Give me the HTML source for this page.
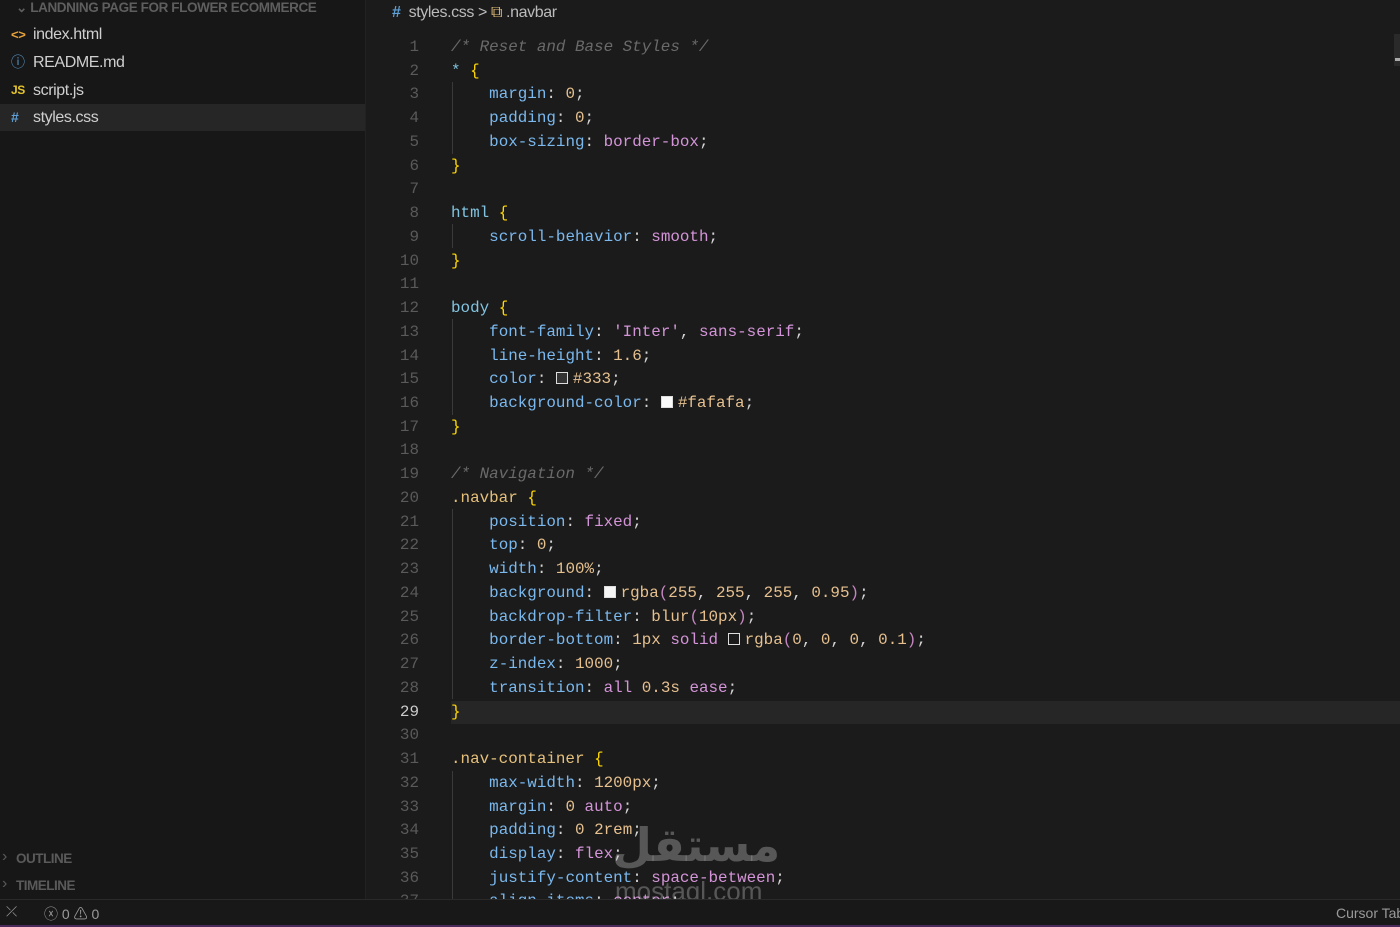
<!DOCTYPE html>
<html><head><style>
*{margin:0;padding:0;box-sizing:border-box}
html,body{width:1400px;height:927px;overflow:hidden}
body{background:#1b1b1b;position:relative;font-family:"Liberation Sans",sans-serif}
.side{position:absolute;left:0;top:0;width:366px;height:899px;background:#171717;border-right:1px solid #222}
.hdr{position:absolute;left:16px;top:0;font-size:13.5px;font-weight:bold;color:#5e5e5e;letter-spacing:-0.4px;white-space:nowrap}
.item{position:absolute;left:0;width:365px;height:27px;font-size:16px;color:#cfcfcf;line-height:27px;padding-left:33px;letter-spacing:-0.4px}
.item i{position:absolute;left:11px;font-style:normal;font-size:12px;font-weight:bold}
.sec{position:absolute;left:16px;font-size:13.5px;font-weight:bold;color:#5a5a5a;letter-spacing:-0.5px}
.sec:before{content:"›";position:absolute;left:-14px;font-weight:normal;font-size:16px;top:-3px}
.crumb{position:absolute;left:392px;top:4px;font-size:16px;color:#bbb;letter-spacing:-0.4px;white-space:nowrap}
.code{position:absolute;left:366px;top:36px;width:1034px;font-family:"Liberation Mono",monospace;font-size:15.9px}
.ln{height:23.74px;line-height:23.74px;position:relative;white-space:pre;color:#d4d4d4}
.ln b{position:absolute;right:981px;font-weight:normal;color:#5a5a5a;text-align:right}
.ln span.t{position:absolute;left:85px}
.cur:after{content:"";position:absolute;left:85px;right:0;top:0;bottom:0;background:#262626;z-index:-1}
.cur b{color:#ccc}
.c{color:#6a6a6a;font-style:italic}.sel{color:#e5c07b}.tg{color:#82c4e0}.br{color:#ffd700}.p{color:#7ab8ee}.n{color:#e6c08f}.k{color:#d494d8}.pu{color:#c586c0}
.sw{display:inline-block;width:12px;height:12px;border:1px solid #ddd;vertical-align:-1px;margin-right:5px}
.guide{position:absolute;left:452px;width:1px;background:#3a3a3a}
.status{position:absolute;left:0;top:899px;width:1400px;height:28px;background:#181818;border-top:1px solid #2a2a2a;color:#9a9a9a;font-size:14px;white-space:nowrap;overflow:hidden}
</style></head><body>
<div class="side">
<div class="hdr">⌄ LANDNING PAGE FOR FLOWER ECOMMERCE</div>
<div class="item" style="top:21px"><i style="color:#e8a33c;font-size:13px">&lt;&gt;</i>index.html</div>
<div class="item" style="top:49px"><i style="color:#5d9fd6;font-size:14px;font-weight:normal">ⓘ</i>README.md</div>
<div class="item" style="top:77px"><i style="color:#e5c52e">JS</i>script.js</div>
<div class="item" style="top:104px;background:#262626"><i style="color:#5d9fd6;font-size:14px">#</i>styles.css</div>
<div class="sec" style="top:851px">OUTLINE</div>
<div class="sec" style="top:878px">TIMELINE</div>
</div>
<div class="crumb"><span style="color:#5d9fd6;font-weight:bold">#</span>&nbsp; styles.css &gt; <span style="color:#e5c07b">⧉</span> .navbar</div>
<div style="position:absolute;left:1394px;top:34px;width:6px;height:32px;background:#2a2a2a"></div>
<div style="position:absolute;left:1395px;top:58px;width:5px;height:3px;background:#aaa"></div>
<div class="guide" style="top:82px;height:72px"></div>
<div class="guide" style="top:224px;height:24px"></div>
<div class="guide" style="top:319px;height:96px"></div>
<div class="guide" style="top:509px;height:190px"></div>
<div class="guide" style="top:771px;height:128px"></div>
<div class="code">
<div class="ln"><b>1</b><span class="t c">/* Reset and Base Styles */</span></div>
<div class="ln"><b>2</b><span class="t"><span class="tg">*</span> <span class="br">{</span></span></div>
<div class="ln"><b>3</b><span class="t">    <span class="p">margin</span>: <span class="n">0</span>;</span></div>
<div class="ln"><b>4</b><span class="t">    <span class="p">padding</span>: <span class="n">0</span>;</span></div>
<div class="ln"><b>5</b><span class="t">    <span class="p">box-sizing</span>: <span class="k">border-box</span>;</span></div>
<div class="ln"><b>6</b><span class="t br">}</span></div>
<div class="ln"><b>7</b></div>
<div class="ln"><b>8</b><span class="t"><span class="tg">html</span> <span class="br">{</span></span></div>
<div class="ln"><b>9</b><span class="t">    <span class="p">scroll-behavior</span>: <span class="k">smooth</span>;</span></div>
<div class="ln"><b>10</b><span class="t br">}</span></div>
<div class="ln"><b>11</b></div>
<div class="ln"><b>12</b><span class="t"><span class="tg">body</span> <span class="br">{</span></span></div>
<div class="ln"><b>13</b><span class="t">    <span class="p">font-family</span>: <span class="k">'Inter'</span>, <span class="k">sans-serif</span>;</span></div>
<div class="ln"><b>14</b><span class="t">    <span class="p">line-height</span>: <span class="n">1.6</span>;</span></div>
<div class="ln"><b>15</b><span class="t">    <span class="p">color</span>: <span class="sw" style="background:#333"></span><span class="n">#333</span>;</span></div>
<div class="ln"><b>16</b><span class="t">    <span class="p">background-color</span>: <span class="sw" style="background:#fafafa"></span><span class="n">#fafafa</span>;</span></div>
<div class="ln"><b>17</b><span class="t br">}</span></div>
<div class="ln"><b>18</b></div>
<div class="ln"><b>19</b><span class="t c">/* Navigation */</span></div>
<div class="ln"><b>20</b><span class="t"><span class="sel">.navbar</span> <span class="br">{</span></span></div>
<div class="ln"><b>21</b><span class="t">    <span class="p">position</span>: <span class="k">fixed</span>;</span></div>
<div class="ln"><b>22</b><span class="t">    <span class="p">top</span>: <span class="n">0</span>;</span></div>
<div class="ln"><b>23</b><span class="t">    <span class="p">width</span>: <span class="n">100%</span>;</span></div>
<div class="ln"><b>24</b><span class="t">    <span class="p">background</span>: <span class="sw" style="background:#f5f5f5"></span><span class="n">rgba</span><span class="pu">(</span><span class="n">255</span>, <span class="n">255</span>, <span class="n">255</span>, <span class="n">0.95</span><span class="pu">)</span>;</span></div>
<div class="ln"><b>25</b><span class="t">    <span class="p">backdrop-filter</span>: <span class="n">blur</span><span class="pu">(</span><span class="n">10px</span><span class="pu">)</span>;</span></div>
<div class="ln"><b>26</b><span class="t">    <span class="p">border-bottom</span>: <span class="n">1px</span> <span class="k">solid</span> <span class="sw" style="background:#1b1b1b"></span><span class="n">rgba</span><span class="pu">(</span><span class="n">0</span>, <span class="n">0</span>, <span class="n">0</span>, <span class="n">0.1</span><span class="pu">)</span>;</span></div>
<div class="ln"><b>27</b><span class="t">    <span class="p">z-index</span>: <span class="n">1000</span>;</span></div>
<div class="ln"><b>28</b><span class="t">    <span class="p">transition</span>: <span class="k">all</span> <span class="n">0.3s</span> <span class="k">ease</span>;</span></div>
<div class="ln cur"><b>29</b><span class="t br">}</span></div>
<div class="ln"><b>30</b></div>
<div class="ln"><b>31</b><span class="t"><span class="sel">.nav-container</span> <span class="br">{</span></span></div>
<div class="ln"><b>32</b><span class="t">    <span class="p">max-width</span>: <span class="n">1200px</span>;</span></div>
<div class="ln"><b>33</b><span class="t">    <span class="p">margin</span>: <span class="n">0</span> <span class="k">auto</span>;</span></div>
<div class="ln"><b>34</b><span class="t">    <span class="p">padding</span>: <span class="n">0</span> <span class="n">2rem</span>;</span></div>
<div class="ln"><b>35</b><span class="t">    <span class="p">display</span>: <span class="k">flex</span>;</span></div>
<div class="ln"><b>36</b><span class="t">    <span class="p">justify-content</span>: <span class="k">space-between</span>;</span></div>
<div class="ln"><b>37</b><span class="t">    <span class="p">align-items</span>: <span class="k">center</span>;</span></div>
</div>
<div style="position:absolute;left:612px;top:818px;font-size:46px;font-weight:bold;color:rgba(200,200,200,0.35);font-family:'DejaVu Sans',sans-serif">مستقل</div>
<div style="position:absolute;left:615px;top:876px;font-size:26px;color:rgba(200,200,200,0.35)">mostaql.com</div>
<div class="status">
<span style="position:absolute;left:6px;top:3px">⤫</span>
<span style="position:absolute;left:44px;top:4px">ⓧ 0 ⚠ 0</span>
<span style="position:absolute;left:1336px;top:5px">Cursor Tab</span>
</div>
<div style="position:absolute;left:0;top:925px;width:1400px;height:2px;background:#4a2a5a"></div>
</body></html>
